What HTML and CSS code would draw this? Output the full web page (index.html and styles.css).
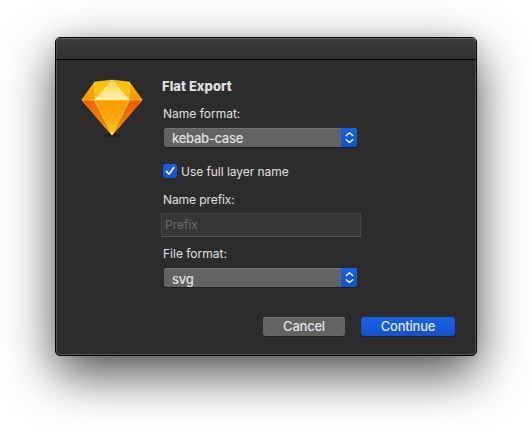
FILE: index.html
```html
<!DOCTYPE html>
<html lang="en">
<head>
<meta charset="utf-8">
<title>Flat Export</title>
<link rel="stylesheet" href="styles.css">
</head>
<body>
<main class="window">
  <header class="titlebar"></header>
  <div class="content">
    <svg class="logo" width="66" height="66" viewBox="0 0 66 66" aria-hidden="true">
      <defs>
        <linearGradient id="front" x1="0" y1="0" x2="0" y2="1"><stop offset="0" stop-color="#ff9b00"/><stop offset=".5" stop-color="#ffa600"/><stop offset="1" stop-color="#ffcc1c"/></linearGradient>
        <linearGradient id="left" x1="0" y1="0" x2="1" y2="1"><stop offset="0" stop-color="#f35c00"/><stop offset="1" stop-color="#ff9000"/></linearGradient>
        <linearGradient id="right" x1="1" y1="0" x2="0" y2="1"><stop offset="0" stop-color="#f05200"/><stop offset="1" stop-color="#ff8a00"/></linearGradient>
        <linearGradient id="top" x1="0" y1="0" x2="0" y2="1"><stop offset="0" stop-color="#ffd33e"/><stop offset="1" stop-color="#ffefb8"/></linearGradient>
        <linearGradient id="side" x1="0" y1="0" x2="0" y2="1"><stop offset="0" stop-color="#ffb40c"/><stop offset="1" stop-color="#ff9200"/></linearGradient>
        <radialGradient id="shade"><stop offset="0" stop-color="#000" stop-opacity=".5"/><stop offset="1" stop-color="#000" stop-opacity="0"/></radialGradient>
      </defs>
      <ellipse cx="32" cy="57" rx="10" ry="3" fill="url(#shade)"/>
      <path d="M14.500 4 32 2 49.500 4 62.500 22 32 57.500 1.500 22Z" fill="#fdc10c"/>
      <path d="M14.500 4 1.500 22H14.500Z M49.500 4 62.500 22H49.500Z" fill="url(#side)"/>
      <path d="M32 2 14.500 22H49.500Z" fill="url(#top)"/>
      <path d="M1.500 22H14.500L32 57.500Z" fill="url(#left)"/>
      <path d="M62.500 22H49.500L32 57.500Z" fill="url(#right)"/>
      <path d="M14.500 22H49.500L32 57.500Z" fill="url(#front)"/>
      <path d="M2 22H62M14.500 22 32 57 49.500 22" fill="none" stroke="#ffe184" stroke-width=".8" stroke-opacity=".75"/>
      <path d="M14.500 4.500V22L32 2.500 49.500 22V4.500M14.500 4 32 2 49.500 4" fill="none" stroke="#ffe78a" stroke-width=".6" stroke-opacity=".65"/>
    </svg>
    <form class="form">
      <h1 class="title">Flat Export</h1>
      <div class="label format-label">Name format:</div>
      <div class="select name-select"><span class="value kebab">kebab-case</span><span class="stepper"><svg width="16" height="19" viewBox="0 0 16 19"><path d="M5.300 7.500 8.500 4.700 11.700 7.500M5.300 11.700 8.500 14.500 11.700 11.700"/></svg></span></div>
      <div class="check-row"><span class="checkbox"><svg width="14" height="14" viewBox="0 0 14 14"><path d="M3.500 7.300 6 10.200 10.700 3.700"/></svg></span><span class="check-text">Use full layer name</span></div>
      <div class="label prefix-label">Name prefix:</div>
      <div class="field"><span class="placeholder">Prefix</span></div>
      <div class="label file-label">File format:</div>
      <div class="select"><span class="value svg-value">svg</span><span class="stepper"><svg width="16" height="19" viewBox="0 0 16 19"><path d="M5.300 7.500 8.500 4.700 11.700 7.500M5.300 11.700 8.500 14.500 11.700 11.700"/></svg></span></div>
    </form>
  </div>
  <footer class="actions">
    <button class="button cancel"><span>Cancel</span></button>
    <button class="button continue"><span>Continue</span></button>
  </footer>
</main>
</body>
</html>
```
FILE: styles.css
```css
* { box-sizing: border-box; }
html { background: #fff; }
body {
  margin: 0;
  padding: 37px 0 0 55px;
  height: 429px;
  overflow: hidden;
  font-family: Inter, "Liberation Sans", sans-serif;
  color: #e0e0e0;
}
.window {
  width: 422px;
  height: 319px;
  border: 1px solid #000;
  border-radius: 5px;
  background: #2c2c2c;
  box-shadow: inset 0 0 0 1px #555, 0 18px 50px rgba(0, 0, 0, .7), 0 0 12px rgba(0, 0, 0, .08);
}
.titlebar {
  height: 22px;
  border-bottom: 1px solid #000;
  border-radius: 4px 4px 0 0;
  background: linear-gradient(#3c3c3c, #303030);
  box-shadow: inset 0 1px #666, inset 1px 0 #4a4a4a, inset -1px 0 #4a4a4a;
}
.content { display: flex; height: 257px; padding: 18px 0 0 24px; }
.logo { display: block; flex: none; }
.form { width: 200px; margin-left: 15px; }
.title { margin: 0 0 0 1px; height: 16px; line-height: 16px; font-size: 13px; font-weight: 800; letter-spacing: .03px; white-space: nowrap; }
.label { margin-left: 2px; height: 16px; line-height: 16px; font-size: 12px; }
.format-label { margin-top: 12px; }
.prefix-label { margin-top: 13px; letter-spacing: -.08px; }
.file-label { margin-top: 9px; }
.select {
  display: flex;
  justify-content: space-between;
  width: 193px;
  height: 19px;
  margin: 6px 0 0 3px;
  border-radius: 3px;
  overflow: hidden;
  background: #636363;
  box-shadow: 0 1px 1px rgba(0, 0, 0, .35), inset 0 1px #737373;
}
.value { padding-left: 8px; line-height: 21px; font-size: 13px; font-weight: 500; letter-spacing: -.28px; }
.svg-value { line-height: 22px; }
.stepper, .continue { background: linear-gradient(#1861e5, #1352cb); }
.stepper { width: 16px; height: 19px; }
.stepper svg, .checkbox svg { display: block; fill: none; stroke: #fff; stroke-linecap: round; stroke-linejoin: round; }
.stepper svg { stroke-width: 1.4; }
.check-row { display: flex; align-items: center; height: 16px; margin: 16px 0 0 2px; }
.checkbox { width: 14px; height: 14px; border-radius: 3px; background: linear-gradient(#1861e5, #1352cb); }
.checkbox svg { stroke-width: 1.7; }
.check-text { margin-left: 4px; padding-top: 1px; font-size: 12px; line-height: 18px; letter-spacing: -.05px; }
.field { width: 200px; height: 24px; margin-top: 5px; border: 1px solid #464646; border-bottom-color: #565656; background: #363636; }
.placeholder { display: block; padding-left: 3px; font-size: 12px; line-height: 22px; color: #6c6c6c; }
.actions { display: flex; justify-content: flex-end; gap: 16px; padding-right: 21px; }
.button {
  width: 82px;
  height: 19px;
  padding: 0;
  border: 0;
  border-radius: 3px;
  color: #e4e4e4;
  background: #636363;
  font: 500 13px/19px Inter, "Liberation Sans", sans-serif;
  letter-spacing: -.22px;
  box-shadow: 0 1px 1px rgba(0, 0, 0, .35), inset 0 1px #737373;
}
.continue { width: 94px; background: linear-gradient(#1861e5, #1352cb); box-shadow: 0 1px 1px rgba(0, 0, 0, .35); }
```
